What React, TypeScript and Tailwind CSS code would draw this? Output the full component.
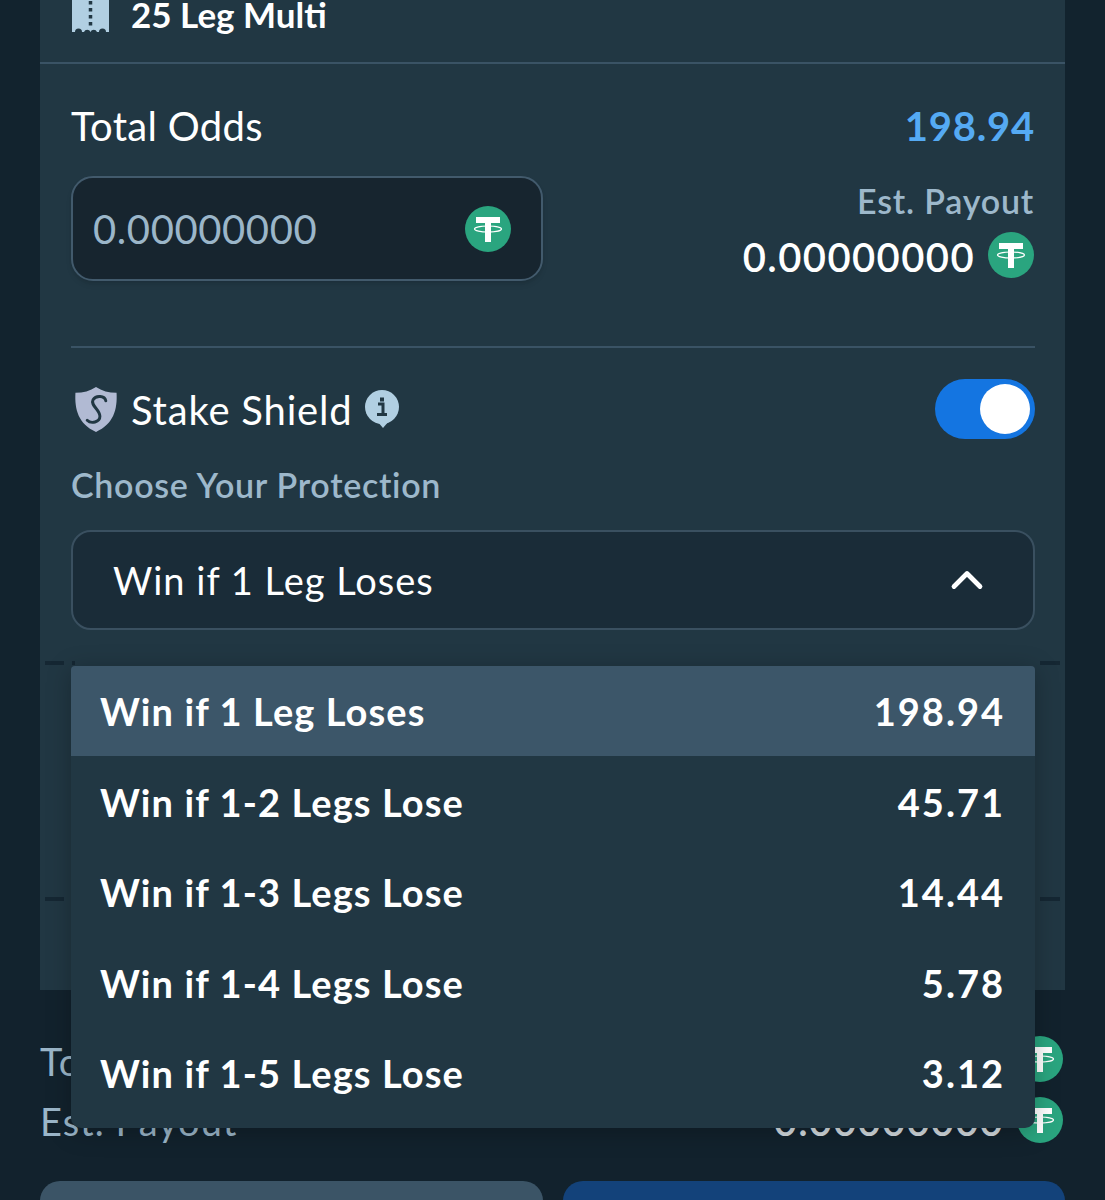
import { ChevronUp } from "lucide-react";

const options = [
  { label: "Win if 1 Leg Loses", odds: "198.94" },
  { label: "Win if 1-2 Legs Lose", odds: "45.71" },
  { label: "Win if 1-3 Legs Lose", odds: "14.44" },
  { label: "Win if 1-4 Legs Lose", odds: "5.78" },
  { label: "Win if 1-5 Legs Lose", odds: "3.12" },
];

function Tether({ className }: { className: string }) {
  return (
    <svg viewBox="0 0 46 46" className={className}>
      <circle cx="23" cy="23" r="23" fill="#2aa57f" />
      <path d="M11 11h24v6h-9v4h-6v-4h-9z" fill="#fff" />
      <rect x="20" y="17" width="6" height="19" fill="#fff" />
      <ellipse cx="23" cy="23" rx="13.500" ry="3" fill="none" stroke="#fff" strokeWidth="1.200" />
    </svg>
  );
}

function Ticket() {
  return (
    <svg viewBox="0 0 37 44" className="w-[37px] h-[44px]">
      <path d="M0 0h37v44h-3a3.500 3.500 0 0 0-7 0h-2a3.500 3.500 0 0 0-6.500 0 3.500 3.500 0 0 0-6.500 0h-2a3.500 3.500 0 0 0-7 0H0z" fill="#b1cfe2" />
      <path d="M18.500 6v34" stroke="#213743" strokeWidth="3.500" strokeDasharray="3.500 3.500" />
    </svg>
  );
}

function Shield() {
  return (
    <svg viewBox="0 0 44 48" className="w-[44px] h-[47px]">
      <path d="M22 1c6 4 13 6 21 6 1 17-3 32-21 40C4 39 0 24 1 7c8 0 15-2 21-6z" fill="#b1bad3" />
      <path d="M32 15c-1-5-10-6-13-1-3 6 7 10 7 17 0 6-9 8-13 4" fill="none" stroke="#213743" strokeWidth="3" strokeLinecap="round" />
    </svg>
  );
}

function InfoBubble() {
  return (
    <svg viewBox="0 0 34 38" className="w-[34px] h-[38px]">
      <circle cx="17" cy="17" r="17" fill="#b1cfe2" />
      <path d="M12 31h12l-6 7z" fill="#b1cfe2" />
      <path d="M13 14h5v10M12 24.500h10" fill="none" stroke="#213743" strokeWidth="3" />
      <rect x="15" y="7.500" width="4" height="4" fill="#213743" />
    </svg>
  );
}

export default function App() {
  return (
    <div className="relative w-[1105px] h-[1200px] overflow-hidden bg-[#12232e] font-['Lato',sans-serif] text-white">
      {/* slip panel */}
      <div className="relative mx-[40px] h-[990px] bg-[#213743]">
        <div className="h-[64px] border-b-2 border-[#3a5365] pl-[32px] flex items-start gap-[23px]">
          <div className="-mt-[12px]"><Ticket /></div>
          <span className="text-[35px] font-bold leading-none -mt-[3px] -ml-[1px]">25 Leg Multi</span>
        </div>

        <div className="pl-[31px] pr-[30px]">
          <div className="flex justify-between items-center pt-[40px]">
            <span className="text-[40px] leading-[44px] tracking-[0.3px]">Total Odds</span>
            <span className="text-[40px] leading-[44px] font-bold tracking-[0.8px] text-[#55aaf3]">198.94</span>
          </div>

          <div className="flex justify-between items-start mt-[28px]">
            <div className="w-[472px] h-[105px] rounded-[22px] border-2 border-[#425a6c] bg-[#17252f] shadow-md flex items-center justify-between pl-[20px] pr-[30px]">
              <span className="text-[40px] tracking-[0.6px] text-[#9bb6c9]">0.00000000</span>
              <Tether className="w-[46px] h-[46px]" />
            </div>
            <div className="flex flex-col items-end pr-[1px]">
              <span className="text-[34px] font-semibold tracking-[0.8px] text-[#9db8cb] leading-[44px] mt-[3px]">Est. Payout</span>
              <div className="flex items-center gap-[13px] mt-[9px]">
                <span className="text-[40px] font-semibold tracking-[1.4px] leading-[46px] translate-y-[2px]">0.00000000</span>
                <Tether className="w-[46px] h-[46px]" />
              </div>
            </div>
          </div>

          <div className="border-t-2 border-[#3a5365] mt-[65px] pt-[31px] flex items-center justify-between">
            <div className="flex items-center pl-[3px]">
              <Shield />
              <span className="text-[40px] tracking-[0.8px] ml-[13px] mr-[13px] translate-y-[1px]">Stake Shield</span>
              <InfoBubble />
            </div>
            <div className="w-[100px] h-[60px] rounded-full bg-[#1475e1] flex items-center justify-end pr-[5px]">
              <div className="w-[50px] h-[50px] rounded-full bg-white" />
            </div>
          </div>

          <div className="text-[34px] font-semibold tracking-[0.7px] text-[#9db8cb] mt-[24px] leading-[44px]">Choose Your Protection</div>

          <div className="mt-[23px] h-[100px] rounded-[20px] border-2 border-[#3a5060] bg-[#1a2c38] flex items-center justify-between pl-[40px] pr-[40px]">
            <span className="text-[38px] tracking-[1px]">Win if 1 Leg Loses</span>
            <ChevronUp className="w-[52px] h-[52px]" strokeWidth={2.2} />
          </div>
        </div>

        {/* dashes peeking out behind the menu */}
        <div className="absolute left-[5px] top-[661px] w-[19px] h-[4px] bg-[#152733]" />
        <div className="absolute left-[32px] top-[661px] w-[3px] h-[4px] bg-[#152733]" />
        <div className="absolute right-[5px] top-[661px] w-[20px] h-[4px] bg-[#152733]" />
        <div className="absolute left-[5px] top-[897px] w-[19px] h-[4px] bg-[#152733]" />
        <div className="absolute right-[5px] top-[897px] w-[20px] h-[4px] bg-[#152733]" />
      </div>

      {/* bottom bar */}
      <div className="h-[210px] pl-[40px] pr-[42px] bg-[#12222d]">
        <div className="flex justify-between items-center pt-[44px] h-[94px]">
          <span className="text-[38px] tracking-[1px] text-[#9bb6c9] translate-y-[2px]">Total Stake</span>
          <div className="flex items-center gap-[15px]">
            <span className="text-[40px] font-semibold tracking-[1.2px] text-[#d5dce0] translate-y-[2px]">0.00000000</span>
            <Tether className="w-[46px] h-[46px]" />
          </div>
        </div>
        <div className="flex justify-between items-center h-[60px] mt-[6px]">
          <span className="text-[38px] tracking-[1px] text-[#9bb6c9] translate-y-[1px]">Est. Payout</span>
          <div className="flex items-center gap-[13px]">
            <span className="text-[40px] font-semibold tracking-[1.2px] text-[#d5dce0] translate-y-[1px]">0.00000000</span>
            <Tether className="w-[46px] h-[46px]" />
          </div>
        </div>
        <div className="flex gap-[20px] mt-[31px] -mr-[2px]">
          <div className="flex-1 h-[60px] rounded-[20px] bg-[#3b5466]" />
          <div className="flex-1 h-[60px] rounded-[20px] bg-[#13427a]" />
        </div>
      </div>

      {/* open menu */}
      <div className="absolute left-[71px] top-[666px] w-[964px] h-[462px] rounded-b-[10px] rounded-t-[4px] overflow-hidden bg-[#213743] shadow-[0_4px_24px_rgba(0,0,0,0.25)]">
        {options.map((o, i) => (
          <div
            key={o.label}
            className={i === 0 ? "h-[90px] pl-[29px] pr-[30px] flex items-center justify-between bg-[#3c5669]" : "h-[90.500px] pl-[29px] pr-[30px] pt-[2px] flex items-center justify-between"}
          >
            <span className="text-[38px] font-bold tracking-[1.1px]">{o.label}</span>
            <span className="text-[38px] font-bold tracking-[2px]">{o.odds}</span>
          </div>
        ))}
      </div>
    </div>
  );
}
